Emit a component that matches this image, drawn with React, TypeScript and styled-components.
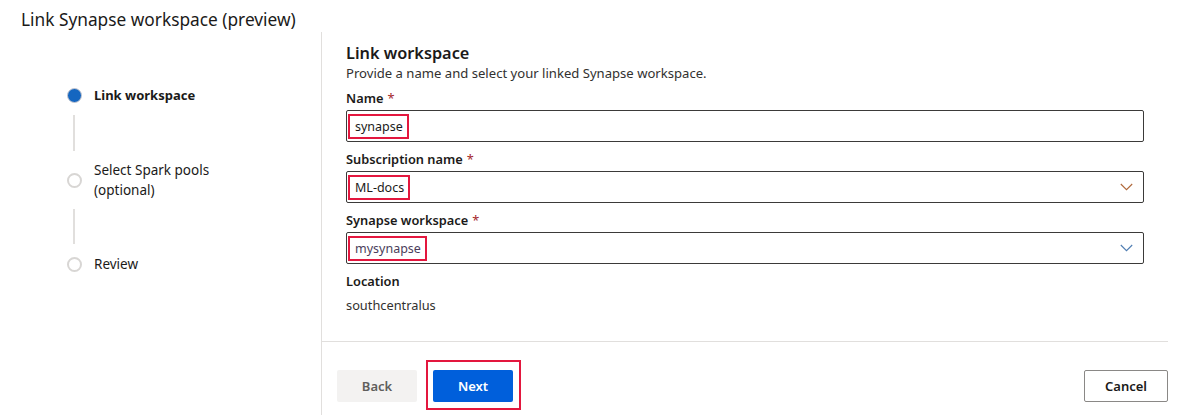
import React from "react";
import styled, { createGlobalStyle } from "styled-components";

const Global = createGlobalStyle`
  html, body { margin: 0; padding: 0; background: #fff; }
  body { font-family: "Noto Sans", "Open Sans", sans-serif; color: #323130; }
  * { box-sizing: border-box; }
`;

const Page = styled.div`
  width: 1180px;
  height: 415px;
  display: flex;
  flex-direction: column;
  background: #fff;
  overflow: hidden;
`;

const Header = styled.div`
  height: 32px;
  padding: 6px 0 0 21px;
  display: flex;
  align-items: center;
  font-size: 17.3px;
  color: #1b1a19;
  white-space: nowrap;
`;

const Body = styled.div`
  flex: 1;
  display: flex;
  min-height: 0;
`;

const Sidebar = styled.div`
  width: 322px;
  border-right: 1px solid #e1dfdd;
  padding: 53px 0 0 67px;
  display: flex;
  flex-direction: column;
`;

const Step = styled.div`
  display: flex;
  align-items: center;
  gap: 12px;
`;

const Dot = styled.span<{ $active?: boolean }>`
  flex: none;
  width: 15px;
  height: 15px;
  border-radius: 50%;
  background: ${(p) => (p.$active ? "#1566c0" : "#fff")};
  border: ${(p) => (p.$active ? "1px solid #c9c9d0" : "2px solid #d8d6d4")};
`;

const StepLabel = styled.span<{ $active?: boolean }>`
  font-size: ${(p) => (p.$active ? "13px" : "13.5px")};
  line-height: 20px;
  font-weight: ${(p) => (p.$active ? 700 : 400)};
  color: #1b1a19;
`;

const Connector = styled.div<{ $h: number; $mt: number; $mb: number }>`
  width: 2px;
  height: ${(p) => p.$h}px;
  background: #e1dfdd;
  margin: ${(p) => p.$mt}px 0 ${(p) => p.$mb}px 6px;
`;

const Main = styled.div`
  flex: 1;
  display: flex;
  flex-direction: column;
  min-width: 0;
`;

const Content = styled.div`
  flex: 1;
  padding: 10px 36px 0 24px;
  display: flex;
  flex-direction: column;
`;

const Title = styled.h2`
  margin: 0;
  font-size: 16.3px;
  line-height: 22px;
  font-weight: 600;
  color: #1b1a19;
`;

const Desc = styled.p`
  margin: 0 0 4px;
  font-size: 13.1px;
  line-height: 18px;
  color: #323130;
`;

const Field = styled.div`
  display: flex;
  flex-direction: column;
  margin-bottom: 5px;
`;

const Label = styled.label`
  font-size: 12.8px;
  line-height: 20px;
  padding-top: 2px;
  font-weight: 600;
  color: #1b1a19;
  margin-bottom: 2px;
`;

const Req = styled.span`
  color: #a4262c;
  font-weight: 400;
  margin-left: 4px;
`;

const Box = styled.div`
  height: 32px;
  border: 1px solid #3b3a39;
  border-radius: 2px;
  display: flex;
  align-items: center;
  justify-content: space-between;
  padding: 0 8px 0 1px;
`;

const Highlight = styled.span<{ $color?: string }>`
  display: inline-flex;
  align-items: center;
  height: 25px;
  padding: 0 4px 0 5px;
  border: 2px solid #e3173e;
  font-size: 12.5px;
  color: ${(p) => p.$color || "#1b1a19"};
  margin-top: 1px;
`;

const Chevron = styled.svg`
  width: 13px;
  height: 8px;
  margin-right: 2px;
`;

const Value = styled.div`
  font-size: 12.8px;
  line-height: 20px;
  padding-top: 2px;
  color: #323130;
`;

const Footer = styled.div`
  height: 74px;
  margin-right: 12px;
  border-top: 1px solid #e1dfdd;
  padding: 28px 0 0 15px;
  display: flex;
  align-items: flex-start;
`;

const Btn = styled.button<{ $kind: "primary" | "disabled" | "default" }>`
  height: 32px;
  min-width: 80px;
  padding: 0 20px;
  border-radius: 2px;
  font-family: inherit;
  font-size: 13px;
  font-weight: 600;
  cursor: pointer;
  border: ${(p) => (p.$kind === "default" ? "1px solid #8a8886" : "none")};
  background: ${(p) =>
    p.$kind === "primary" ? "#005fdb" : p.$kind === "disabled" ? "#f3f2f1" : "#fff"};
  color: ${(p) =>
    p.$kind === "primary" ? "#fff" : p.$kind === "disabled" ? "#5f5e5c" : "#1b1a19"};
`;

const Marked = styled.span`
  position: relative;
  display: inline-flex;
  margin-left: 16px;
  &::after {
    content: "";
    position: absolute;
    top: -10px;
    bottom: -8px;
    left: -7px;
    right: -8px;
    border: 2px solid #e3173e;
    pointer-events: none;
  }
`;

const Spacer = styled.div`
  flex: 1;
`;

const Chev = ({ color }: { color: string }) => (
  <Chevron viewBox="0 0 13 8">
    <path d="M0.8 1 L6.5 6.7 L12.2 1" fill="none" stroke={color} strokeWidth="1.1" />
  </Chevron>
);

export default function App() {
  return (
    <Page>
      <Global />
      <Header>Link Synapse workspace (preview)</Header>
      <Body>
        <Sidebar>
          <Step>
            <Dot $active />
            <StepLabel $active>Link workspace</StepLabel>
          </Step>
          <Connector $h={36} $mt={10} $mb={9} />
          <Step>
            <Dot />
            <StepLabel>
              Select Spark pools
              <br />
              (optional)
            </StepLabel>
          </Step>
          <Connector $h={35} $mt={9} $mb={10} />
          <Step>
            <Dot />
            <StepLabel>Review</StepLabel>
          </Step>
        </Sidebar>
        <Main>
          <Content>
            <Title>Link workspace</Title>
            <Desc>Provide a name and select your linked Synapse workspace.</Desc>
            <Field>
              <Label>
                Name<Req>*</Req>
              </Label>
              <Box>
                <Highlight>synapse</Highlight>
              </Box>
            </Field>
            <Field>
              <Label>
                Subscription name<Req>*</Req>
              </Label>
              <Box>
                <Highlight>ML-docs</Highlight>
                <Chev color="#b0683a" />
              </Box>
            </Field>
            <Field>
              <Label>
                Synapse workspace<Req>*</Req>
              </Label>
              <Box>
                <Highlight $color="#4a3d5a">mysynapse</Highlight>
                <Chev color="#4f7db2" />
              </Box>
            </Field>
            <Field>
              <Label>Location</Label>
              <Value>southcentralus</Value>
            </Field>
          </Content>
          <Footer>
            <Btn $kind="disabled">Back</Btn>
            <Marked>
              <Btn $kind="primary">Next</Btn>
            </Marked>
            <Spacer />
            <Btn $kind="default">Cancel</Btn>
          </Footer>
        </Main>
      </Body>
    </Page>
  );
}
